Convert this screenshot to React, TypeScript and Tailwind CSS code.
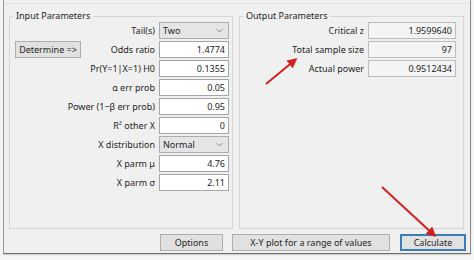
import React from "react";

const font = { fontFamily: '"Noto Sans", "Open Sans", sans-serif' };

function Field({ value, readOnly, w }: { value: string; readOnly?: boolean; w: string }) {
  return (
    <div
      className={
        "h-[17px] shrink-0 flex items-center justify-end pr-[3px] border " +
        w +
        (readOnly ? " bg-[#f4f4f4] border-[#bdbdbd]" : " bg-white border-[#a6a6a6]")
      }
    >
      {value}
    </div>
  );
}

function Combo({ value }: { value: string }) {
  return (
    <div className="h-[17px] w-[70px] shrink-0 flex items-center justify-between pl-[3px] pr-[5px] border border-[#adadad] bg-[#e5e5e5]">
      <span>{value}</span>
      <svg width="7" height="5" viewBox="0 0 7 5">
        <path d="M0.5 1 L3.5 4 L6.5 1" fill="none" stroke="#8a8a8a" strokeWidth="1" />
      </svg>
    </div>
  );
}

function Btn({ children, w, focus }: { children: React.ReactNode; w: string; focus?: boolean }) {
  return (
    <div
      className={
        "h-[17px] shrink-0 flex items-center justify-center bg-[#e1e1e1] " +
        w +
        (focus ? " border-2 border-[#3b7db4]" : " border border-[#adadad]")
      }
    >
      {children}
    </div>
  );
}

const inputRows: { label: string; value: string; combo?: boolean }[] = [
  { label: "Tail(s)", value: "Two", combo: true },
  { label: "Odds ratio", value: "1.4774" },
  { label: "Pr(Y=1|X=1) H0", value: "0.1355" },
  { label: "α err prob", value: "0.05" },
  { label: "Power (1−β err prob)", value: "0.95" },
  { label: "R² other X", value: "0" },
  { label: "X distribution", value: "Normal", combo: true },
  { label: "X parm μ", value: "4.76" },
  { label: "X parm σ", value: "2.11" },
];

const outputRows = [
  { label: "Critical z", value: "1.9599640" },
  { label: "Total sample size", value: "97" },
  { label: "Actual power", value: "0.9512434" },
];

export default function App() {
  return (
    <div className="w-[474px] h-[260px] bg-[#f6f6f6] relative overflow-hidden text-[9px] text-[#1e1e1e]" style={font}>
      <div className="ml-[3px] w-[468px] h-[254px] bg-[#f0f0f0] border-l border-r border-b border-l-[#9a9a9a] border-r-[#8a8a8a] border-b-[#6e6e6e] shadow-[0_1px_1px_rgba(0,0,0,0.15)] flex flex-col">
        <div className="mt-[3px] h-px bg-[#e2e2e2]" />
        <div className="flex pl-[5px] gap-[6px] mt-[6px]">
          {/* Input group */}
          <fieldset className="w-[224px] min-w-0 h-[219px] border border-[#d6d6d6] pl-[5px] pr-[3px] m-0">
            <legend className="-ml-[2px] px-[3px] leading-[12px] text-[9px]">Input Parameters</legend>
            <div className="flex flex-col gap-[2px]">
              {inputRows.map((r, i) => (
                <div key={i} className="h-[17px] flex items-center">
                  {i === 1 && <Btn w="w-[66px]">Determine =&gt;</Btn>}
                  <div className="flex-1 min-w-0 text-right whitespace-nowrap pr-[4px]">{r.label}</div>
                  {r.combo ? <Combo value={r.value} /> : <Field value={r.value} w="w-[70px]" />}
                </div>
              ))}
            </div>
          </fieldset>
          {/* Output group */}
          <fieldset className="w-[225px] min-w-0 h-[219px] border border-[#d6d6d6] pl-[5px] pr-[7px] m-0">
            <legend className="-ml-[2px] px-[3px] leading-[12px] text-[9px]">Output Parameters</legend>
            <div className="flex flex-col gap-[2px]">
              {outputRows.map((r, i) => (
                <div key={i} className="h-[17px] flex items-center">
                  <div className="flex-1 min-w-0 text-right whitespace-nowrap pr-[4px]">{r.label}</div>
                  <Field value={r.value} readOnly w="w-[88px]" />
                </div>
              ))}
            </div>
          </fieldset>
        </div>
        <div className="flex justify-end mt-[5px] pr-[4px]">
          <Btn w="w-[63px]">Options</Btn>
          <div className="w-[9px]" />
          <Btn w="w-[158px]">X-Y plot for a range of values</Btn>
          <div className="w-[10px]" />
          <Btn w="w-[66px]" focus>Calculate</Btn>
        </div>
      </div>
      {/* red annotation arrows */}
      <svg className="absolute left-0 top-0 pointer-events-none" width="474" height="260">
        <defs>
          <marker id="ah" markerWidth="5" markerHeight="5" refX="3.5" refY="2.5" orient="auto" markerUnits="strokeWidth">
            <path d="M0 0 L5 2.5 L0 5 Z" fill="#d41f1f" />
          </marker>
        </defs>
        <line x1="266" y1="84" x2="295" y2="60" stroke="#d41f1f" strokeWidth="2" markerEnd="url(#ah)" />
        <line x1="382" y1="187" x2="434" y2="235" stroke="#d41f1f" strokeWidth="2" markerEnd="url(#ah)" />
      </svg>
    </div>
  );
}
